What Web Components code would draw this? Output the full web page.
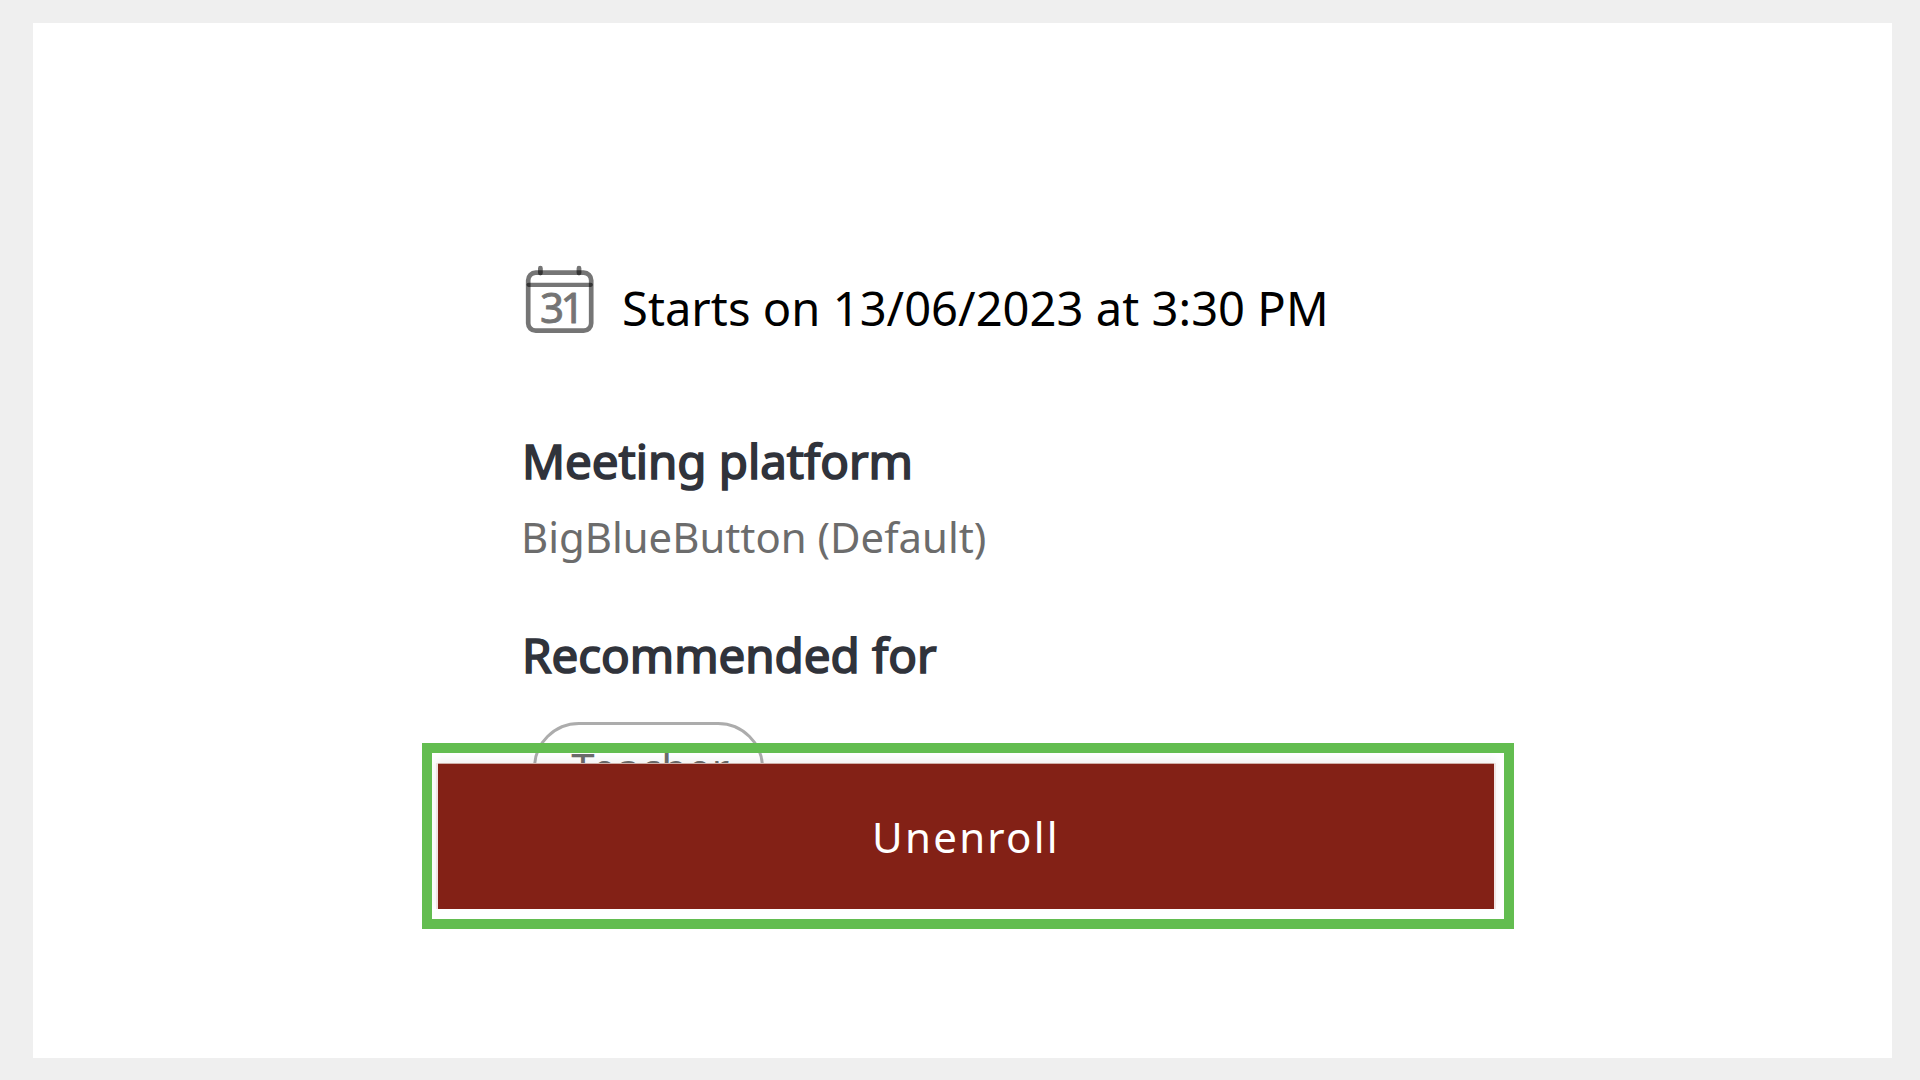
<!DOCTYPE html>
<html lang="en">
<head>
<meta charset="utf-8">
<title>Meeting</title>
<style>
html,body{margin:0;height:100%;overflow:hidden}
body{background:#efefef;font-family:"Noto Sans",sans-serif}
</style>
</head>
<body>
<meeting-page>
  <start-row>Starts on 13/06/2023 at 3:30 PM</start-row>
  <info-section heading="Meeting platform">BigBlueButton (Default)</info-section>
  <info-section class="rec" heading="Recommended for"><role-chip>Teacher</role-chip></info-section>
  <enroll-action slot="action">Unenroll</enroll-action>
</meeting-page>
<script>
const define = (name, html, setup) => customElements.define(name, class extends HTMLElement {
  connectedCallback() {
    if (this.shadowRoot) return;
    this.attachShadow({mode: 'open'}).innerHTML = html;
    if (setup) setup(this);
  }
});

define('meeting-page', `<style>
:host{display:block;box-sizing:border-box;width:1920px;height:1080px;padding:23px 28px 22px 33px;background:#efefef}
main{position:relative;box-sizing:border-box;height:100%;background:#fff;padding:253px 0 0 488px;display:flex;flex-direction:column;align-items:flex-start}
::slotted(info-section){margin-top:89px}
::slotted(.rec){margin-top:58px}
::slotted([slot=action]){position:absolute;left:389px;top:720px}
</style><main><slot></slot><slot name="action"></slot></main>`);

define('calendar-icon', `<style>:host{display:block;width:76px;height:74px}svg{display:block}</style>
<svg width="76" height="74" viewBox="521 264 76 74" fill="none">
<g stroke="#000" stroke-opacity=".54" stroke-width="4.7" stroke-linecap="round">
<rect x="528.2" y="272.7" width="63" height="58" rx="7.5"/>
<path d="M528.6 284.8H590.8" stroke-width="4.2"/>
<path d="M540.4 268.2V273M579 268.2V273" stroke-width="4.8"/>
</g>
<text x="540 560.5" y="322.6" font-family="Noto Sans, sans-serif" font-size="42" fill="#000" stroke="#000" stroke-width="1" stroke-linejoin="round" opacity=".54">31</text>
</svg>`);

define('start-row', `<style>
:host{display:flex;align-items:flex-start;gap:25px;color:#000;font-size:47.1px;line-height:64px;letter-spacing:.03px;white-space:nowrap}
calendar-icon{margin-top:-12px;height:64px}
</style><calendar-icon></calendar-icon><span><slot></slot></span>`);

define('info-section', `<style>
:host{display:block;font-size:41.85px;line-height:56px;color:#6c6c6c;white-space:nowrap}
h2{margin:0 0 16px;padding-left:1px;font-size:47.5px;line-height:64px;font-weight:400;color:#30333b;-webkit-text-stroke:1.7px #30333b;letter-spacing:-.03px}
</style><h2></h2><div><slot></slot></div>`,
el => el.shadowRoot.querySelector('h2').textContent = el.getAttribute('heading'));

define('role-chip', `<style>
:host{display:flex;box-sizing:border-box;width:231px;height:92px;margin:35px 0 0 12px;padding-left:4px;border:3px solid #acacac;border-radius:46px;align-items:center;justify-content:center;color:#6c6c6c;font-size:42px;line-height:56px;letter-spacing:.5px}
</style><slot></slot>`);

define('enroll-action', `<style>
:host{display:block;box-sizing:border-box;width:1092px;height:186px;border:10px solid #63bd50;padding:10px 8px 10px 4px}
.wrap{height:100%;box-sizing:border-box;padding:0 2px;background:#f0e5e3;box-shadow:0 -3px 9px rgba(0,0,0,.06);clip-path:inset(-10px -4px 0 -4px)}
button{display:block;box-sizing:border-box;width:100%;height:100%;border:0;border-top:1px solid #cfaea6;margin:0;padding:0;background:#832116;color:#fff;font:400 42px/56px "Noto Sans",sans-serif;letter-spacing:2.24px}
</style><div class="wrap"><button><slot></slot></button></div>`);
</script>
</body>
</html>
